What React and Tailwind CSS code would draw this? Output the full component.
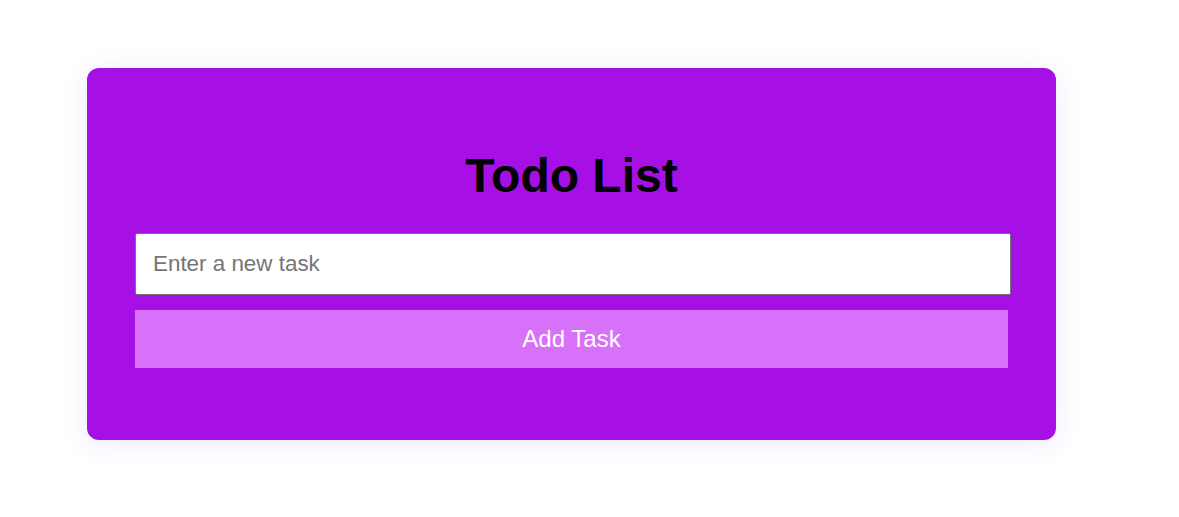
export default function App() {
  return (
    <div className="w-[1179px] h-[517px] bg-white pt-[68px]" style={{ fontFamily: '"Liberation Sans", Arial, sans-serif' }}>
      <div className="ml-[87px] w-[969px] h-[372px] rounded-[12px] bg-[#a710e5] px-[48px] pt-[48px] flex flex-col shadow-[0_4px_24px_rgba(90,90,255,0.12)]">
        <h1 className="mt-[32px] mb-[30px] text-[48px] leading-[55px] font-bold text-black text-center">Todo List</h1>
        <input
          type="text"
          placeholder="Enter a new task"
          className="w-[876px] h-[62px] bg-white border border-[#767676] rounded-[2px] px-[17px] text-[22.4px] text-black placeholder:text-[#757575] outline-none"
        />
        <button className="mt-[15px] w-[873px] h-[58px] bg-[#d871f9] text-white text-[24px]">Add Task</button>
      </div>
    </div>
  );
}
